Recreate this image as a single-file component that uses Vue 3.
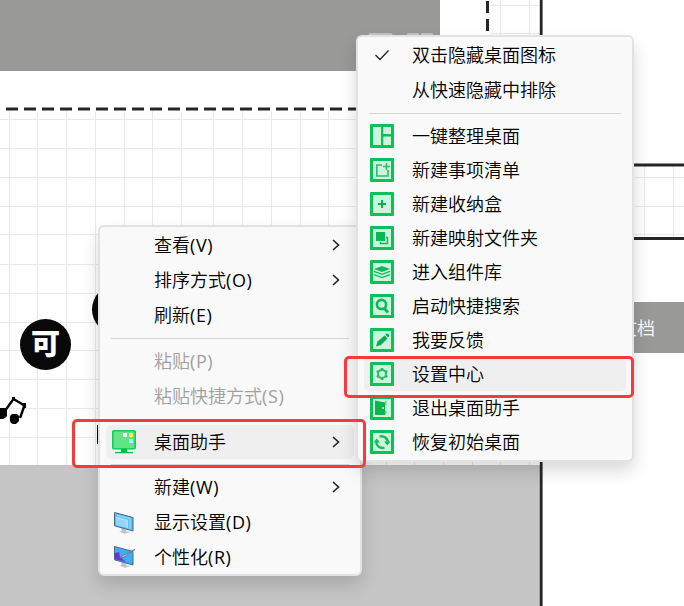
<script setup>
const gridX = [9, 37, 66, 95, 124, 152, 181, 213, 242, 271, 300, 328, 357, 386, 414, 443, 472, 500, 529]
const gridY = [119, 148, 177, 206, 234, 264, 293, 322, 350, 379, 408, 437]

const mainMenu = [
  { label: '查看', hotkey: '(V)', arrow: true },
  { label: '排序方式', hotkey: '(O)', arrow: true },
  { label: '刷新', hotkey: '(E)' },
  { sep: true },
  { label: '粘贴', hotkey: '(P)', disabled: true },
  { label: '粘贴快捷方式', hotkey: '(S)', disabled: true },
  { sep: true },
  { label: '桌面助手', icon: 'assistant', arrow: true, active: true },
  { sep: true },
  { label: '新建', hotkey: '(W)', arrow: true },
  { label: '显示设置', hotkey: '(D)', icon: 'display' },
  { label: '个性化', hotkey: '(R)', icon: 'personalize', short: true },
]

const subMenu = [
  { label: '一键整理桌面', icon: 'layout' },
  { label: '新建事项清单', icon: 'list' },
  { label: '新建收纳盒', icon: 'plus' },
  { label: '新建映射文件夹', icon: 'folder' },
  { label: '进入组件库', icon: 'layers' },
  { label: '启动快捷搜索', icon: 'search' },
  { label: '我要反馈', icon: 'pencil' },
  { label: '设置中心', icon: 'gear', active: true },
  { label: '退出桌面助手', icon: 'door' },
  { label: '恢复初始桌面', icon: 'refresh' },
]
</script>

<template>
  <main class="desktop">
    <svg class="backdrop" width="684" height="606" viewBox="0 0 684 606">
      <g fill="#e9e9e9">
        <rect v-for="x in gridX" :key="'x' + x" :x="x" y="111" width="1" height="354" />
        <rect v-for="y in gridY" :key="'y' + y" x="0" :y="y" width="540" height="1" />
        <rect x="490" y="5" width="50" height="1" />
        <rect x="490" y="33" width="50" height="1" />
        <rect x="500" y="0" width="1" height="36" />
        <rect x="529" y="0" width="1" height="36" />
        <rect x="600" y="177" width="84" height="1" />
        <rect x="600" y="206" width="84" height="1" />
        <rect x="600" y="234" width="84" height="1" />
        <rect x="644" y="166" width="1" height="71" />
        <rect x="673" y="166" width="1" height="71" />
      </g>
      <rect width="440" height="71" fill="#999997" />
      <path d="M369 39V36q0-2 2-2h19q2 0 2 2v3M408 39v-5h10v5M422 39v-5h10v5" fill="none" stroke="#d0d0ce" stroke-width="1.5" />
      <rect y="465" width="540" height="141" fill="#c5c5c5" />
      <path d="M6 109H360" stroke="#262626" stroke-width="3" stroke-dasharray="12 6" />
      <path d="M487.5 1V36" stroke="#262626" stroke-width="3" stroke-dasharray="12 6" />
      <path d="M541.2 0V606" stroke="#262626" stroke-width="2.8" />
      <path d="M630 165H684M630 238.500H684" stroke="#262626" stroke-width="3" />
      <circle cx="45.500" cy="344.500" r="25.500" fill="#090909" />
      <circle cx="117" cy="309.500" r="25" fill="#090909" />
      <g fill="#000">
        <path d="M0 408h6l1 2v6l-2 2-2 1H0z" />
        <path d="M12 414h5l2 2v5l-2 2-1 1h-3l-2-1-1-2v-5z" />
        <path d="M5.500 410L13.500 399L24.500 405.500L20 418" fill="none" stroke="#000" stroke-width="2.400" />
        <path d="M12 397h3v3h-3z M22 403h4v5h-3z" />
      </g>
      <rect x="97" y="425" width="1.500" height="19" fill="#000" />
    </svg>
    <span class="badge-char">可</span>
    <div class="doc-button">文档</div>

    <nav class="menu menu-main">
      <template v-for="(item, i) in mainMenu" :key="i">
        <hr v-if="item.sep" class="sep" />
        <div v-else class="row" :class="{ active: item.active, disabled: item.disabled, short: item.short }">
          <span class="icon">
            <svg v-if="item.icon === 'assistant'" width="24" height="24" viewBox="0 0 24 24">
              <rect x=".8" y=".8" width="22.400" height="18" rx="1" fill="#62e486" stroke="#16cb5b" stroke-width="1.600" />
              <path d="M9 19h6v3h6v1.200H3V22h6z" fill="#08bd50" />
              <path d="M11 3h4v4h-4z" fill="#fff" /><path d="M17 3h4v4h-4z" fill="#fff34d" /><path d="M17 9h4v4h-4z" fill="#a5faf3" />
            </svg>
            <svg v-else-if="item.icon === 'display'" width="24" height="24" viewBox="0 0 24 24">
              <path d="M9 17l5 1.500v2l5 .5-6 1.800-6-2.300 3-.5z" fill="#bcc2c7" />
              <path d="M2.500 1.500L21 6.500V20L2.500 14.800z" fill="#58bdf4" stroke="#496a80" />
              <path d="M4 5.500l12 3.300v8.500L4 14z" fill="#91d5ff" />
              <path d="M5 4.200l13 3.500v10M4 6.500l11 3v7" fill="none" stroke="#c4eaff" stroke-width=".8" />
            </svg>
            <svg v-else-if="item.icon === 'personalize'" width="24" height="24" viewBox="0 0 24 24">
              <path d="M9 17l5 1.500v2l5 .5-6 1.800-6-2.300 3-.5z" fill="#bcc2c7" />
              <path d="M2.500 1.500L21 6.500V20L2.500 14.800z" fill="#3fadf6" stroke="#496a80" />
              <path d="M3 8l4-1 1 5 6 4.800L3 14.300z" fill="#752be0" />
              <path d="M7.500 13l3.500-2.500 12-6-11 7.500z" fill="#ccd8df" stroke="#577080" stroke-width=".8" />
            </svg>
          </span>
          <span class="label">{{ item.label }}<span v-if="item.hotkey" class="hotkey">{{ item.hotkey }}</span></span>
          <svg v-if="item.arrow" class="arrow" width="8" height="12" viewBox="0 0 8 12">
            <path d="M1 1l5.500 5L1 11" fill="none" stroke="#222" stroke-width="1.600" />
          </svg>
        </div>
      </template>
    </nav>

    <nav class="menu menu-sub">
      <div class="row tall">
        <span class="icon">
          <svg width="24" height="24" viewBox="0 0 24 24"><path d="M5.500 11l4.500 4.500 8.500-9" fill="none" stroke="#222" stroke-width="1.300" /></svg>
        </span>
        <span class="label">双击隐藏桌面图标</span>
      </div>
      <div class="row tall"><span class="icon"></span><span class="label">从快速隐藏中排除</span></div>
      <hr class="sep" />
      <div v-for="item in subMenu" :key="item.label" class="row" :class="{ active: item.active }">
        <svg class="icon tile" width="24" height="24" viewBox="0 0 24 24">
          <rect width="24" height="24" rx="1" fill="#0cc258" />
          <rect x="3" y="3" width="18" height="18" fill="#cbf6dd" />
          <path v-if="item.icon === 'layout'" d="M11 3h2.300v7H21v2.500h-7.700V21H11z" fill="#0cc258" />
          <path v-else-if="item.icon === 'list'" d="M12 7H6.800v11H18v-6M16.500 5v7M13 8.500H20" fill="none" stroke="#2cbd6b" stroke-width="1.600" />
          <path v-else-if="item.icon === 'plus'" d="M12 8v8M8 12h8" fill="none" stroke="#0cae50" stroke-width="2" />
          <g v-else-if="item.icon === 'folder'">
            <path d="M6 6h9v9H6z" fill="#08b950" /><path d="M16 11.500h1.500v6h-7V16" fill="none" stroke="#08b950" stroke-width="1.400" />
          </g>
          <g v-else-if="item.icon === 'layers'" fill="none" stroke="#13b75a" stroke-width="1.400">
            <path d="M12 6l8 3-8 3-8-3z" fill="#13b75a" stroke="none" /><path d="M4 11.300l8 3 8-3M4 14.600l8 3 8-3" />
          </g>
          <g v-else-if="item.icon === 'search'" fill="none" stroke="#0db956">
            <circle cx="11.500" cy="10.500" r="4.600" stroke-width="2.600" /><path d="M14 14l4 4.500" stroke-width="3" />
          </g>
          <g v-else-if="item.icon === 'pencil'" fill="#0bad50">
            <path d="M6 18.500l1.500-5 7-6 3 3-6.500 6.500z" /><path d="M15.300 6.500l1-.8q1.200-.5 2.300.6 1 1.200.2 2.400l-.8.8z" />
          </g>
          <g v-else-if="item.icon === 'gear'" fill="none" stroke="#28bd68">
            <circle cx="12" cy="12" r="4" stroke-width="2" />
            <path d="M12 6v2M12 16v2M6.800 9l1.700 1M15.500 14l1.700 1M6.800 15l1.700-1M15.500 10l1.700-1" stroke-width="2.600" />
          </g>
          <g v-else-if="item.icon === 'door'">
            <path d="M15 5h1.500v4H15zM15 15h1.500v3H15z" fill="#5fd890" /><path d="M5 4.500l10 2V19H5z" fill="#08b44f" /><circle cx="13" cy="12" r="1" fill="#d5f8e3" />
          </g>
          <g v-else fill="none" stroke="#1aba5e" stroke-width="2.400">
            <path d="M9.500 6.700A6 6 0 0 1 17.600 13M14.500 17.500A6 6 0 0 1 6.400 11" />
            <path d="M14 11.500h6.500l-3.200 4zM3.500 12.500H10l-3.300-4z" fill="#1aba5e" stroke="none" />
          </g>
        </svg>
        <span class="label">{{ item.label }}</span>
      </div>
    </nav>

    <div class="mark mark-main"></div>
    <div class="mark mark-sub"></div>
  </main>
</template>

<style>
body { margin: 0; background: #fff; }
</style>

<style scoped>
.desktop {
  position: relative;
  width: 684px;
  height: 606px;
  overflow: hidden;
  background: #fff;
  font-family: "Noto Sans CJK SC", sans-serif;
  font-size: 18px;
  font-weight: 350;
  color: #000;
}
.backdrop { display: block; }
.badge-char {
  position: absolute;
  left: 31px;
  top: 322px;
  width: 29px;
  line-height: 40px;
  text-align: center;
  font-size: 29px;
  font-weight: 900;
  color: #fff;
}
.doc-button {
  position: absolute;
  left: 560px;
  top: 302px;
  width: 95px;
  height: 51px;
  padding-right: 29px;
  line-height: 51px;
  text-align: right;
  color: #fff;
  background: #999997;
}
.menu {
  position: absolute;
  box-sizing: border-box;
  border: 2px solid #e2e2e2;
  border-radius: 6px;
  background: #f9f9f9;
  box-shadow: 0 9px 17px rgba(0, 0, 0, .15);
}
.menu-main { left: 98px; top: 225px; width: 264px; height: 351px; padding: 1px 6px 0; }
.menu-sub { left: 356px; top: 35px; width: 278px; height: 427px; padding: 1px 6px 0; }
.row {
  display: flex;
  align-items: center;
  height: 34px;
  border-radius: 5px;
  box-sizing: border-box;
  padding: 0 14px 0 6px;
}
.menu-main .row { height: 35px; }
.menu-main .row.active, .menu-main .row.short { height: 34px; }
.menu-sub .row.tall { height: 35px; }
.row.active { background: #efefef; }
.row.disabled { color: #a0a0a0; }
.icon { flex: none; display: block; width: 24px; height: 24px; }
.label { flex: 1; margin-left: 18px; padding-bottom: 3px; line-height: 28px; white-space: nowrap; }
.hotkey { font-family: "Open Sans", "Noto Sans", sans-serif; font-weight: 400; line-height: 1; letter-spacing: .6px; }
.arrow { margin-bottom: 1px; }
.sep { height: 1px; margin: 5px; border: 0; background: #d6d6d6; }
.mark {
  position: absolute;
  box-sizing: border-box;
  border: 3px solid #fa3a3a;
  border-radius: 5px;
}
.mark-main { left: 72px; top: 419px; width: 294px; height: 49px; }
.mark-sub { left: 344px; top: 356px; width: 290px; height: 42px; }
</style>
